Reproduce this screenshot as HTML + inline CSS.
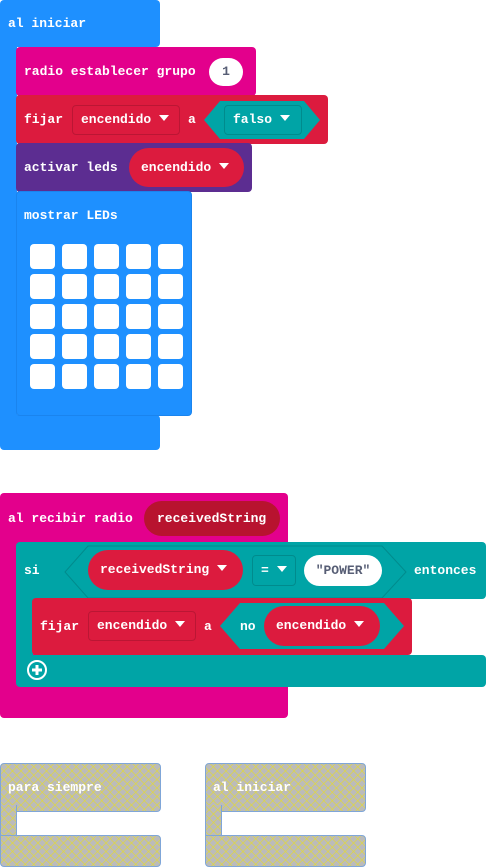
<!DOCTYPE html>
<html><head><meta charset="utf-8"><style>
*{margin:0;padding:0;box-sizing:border-box}
body{width:486px;height:867px;background:#fff;position:relative;overflow:hidden;font-family:"Liberation Mono","DejaVu Sans Mono",monospace;font-weight:bold;font-size:13px;color:#fff}
.a{position:absolute}
.t{position:absolute;white-space:nowrap;line-height:16px}
.r{border-radius:4px}
.led{position:absolute;width:25px;height:25px;background:#fff;border-radius:4px}
.dd{position:absolute;border-radius:4px;border:1px solid rgba(0,0,0,.15)}
.pill{position:absolute;border-radius:20px}
.dis{background-color:#bbb;background-image:repeating-linear-gradient(45deg,rgba(230,220,40,.55) 0 1px,transparent 1px 6px),repeating-linear-gradient(-45deg,rgba(230,220,40,.55) 0 1px,transparent 1px 6px);border:1px solid #7fa6d8}
.tri{display:inline-block;width:0;height:0;border-left:5px solid transparent;border-right:5px solid transparent;border-top:6px solid #fff;margin-left:8px;vertical-align:2px}
</style></head><body>
<!-- block 1 -->
<div class="a r" style="left:0;top:0;width:160px;height:47px;background:#1e90ff"></div>
<div class="a" style="left:0;top:40px;width:17px;height:400px;background:#1e90ff"></div>
<div class="a r" style="left:0;top:415px;width:160px;height:35px;background:#1e90ff"></div>
<div class="t" style="left:8px;top:16px">al iniciar</div>

<div class="a r" style="left:16px;top:47px;width:240px;height:49px;background:#e3008c"></div>
<div class="t" style="left:24px;top:64px">radio establecer grupo</div>
<div class="pill" style="left:209px;top:58px;width:34px;height:28px;background:#fff;color:#575e75;text-align:center;line-height:28px">1</div>

<div class="a r" style="left:16px;top:95px;width:312px;height:49px;background:#dc1b3e"></div>
<div class="t" style="left:24px;top:112px">fijar</div>
<div class="dd" style="left:72px;top:105px;width:108px;height:30px;line-height:28px;padding-left:8px">encendido<span class="tri"></span></div>
<div class="t" style="left:188px;top:112px">a</div>
<svg class="a" style="left:204px;top:100px" width="118" height="40"><polygon points="0,20 16,1 100,1 116,20 100,39 16,39" fill="#00a4a6"/></svg>
<div class="dd" style="left:224px;top:105px;width:78px;height:30px;line-height:28px;padding-left:8px">falso<span class="tri"></span></div>

<div class="a r" style="left:16px;top:143px;width:236px;height:49px;background:#5c2d91"></div>
<div class="t" style="left:24px;top:160px">activar leds</div>
<div class="pill" style="left:129px;top:148px;width:115px;height:39px;background:#dc1b3e;line-height:39px;padding-left:12px">encendido<span class="tri"></span></div>

<div class="a r" style="left:16px;top:191px;width:176px;height:225px;background:#1e90ff;border:1px solid #1a84ee"></div>
<div class="t" style="left:24px;top:208px">mostrar LEDs</div>
<div class="led" style="left:30px;top:244px"></div><div class="led" style="left:62px;top:244px"></div><div class="led" style="left:94px;top:244px"></div><div class="led" style="left:126px;top:244px"></div><div class="led" style="left:158px;top:244px"></div>
<div class="led" style="left:30px;top:274px"></div><div class="led" style="left:62px;top:274px"></div><div class="led" style="left:94px;top:274px"></div><div class="led" style="left:126px;top:274px"></div><div class="led" style="left:158px;top:274px"></div>
<div class="led" style="left:30px;top:304px"></div><div class="led" style="left:62px;top:304px"></div><div class="led" style="left:94px;top:304px"></div><div class="led" style="left:126px;top:304px"></div><div class="led" style="left:158px;top:304px"></div>
<div class="led" style="left:30px;top:334px"></div><div class="led" style="left:62px;top:334px"></div><div class="led" style="left:94px;top:334px"></div><div class="led" style="left:126px;top:334px"></div><div class="led" style="left:158px;top:334px"></div>
<div class="led" style="left:30px;top:364px"></div><div class="led" style="left:62px;top:364px"></div><div class="led" style="left:94px;top:364px"></div><div class="led" style="left:126px;top:364px"></div><div class="led" style="left:158px;top:364px"></div>

<!-- block 2 -->
<div class="a r" style="left:0;top:493px;width:288px;height:225px;background:#e3008c"></div>
<div class="t" style="left:8px;top:511px">al recibir radio</div>
<div class="pill" style="left:144px;top:501px;width:136px;height:35px;background:#b8132f;line-height:35px;padding-left:13px">receivedString</div>

<div class="a r" style="left:16px;top:542px;width:470px;height:57px;background:#00a4a6"></div>
<div class="a" style="left:16px;top:590px;width:17px;height:80px;background:#00a4a6"></div>
<div class="a r" style="left:16px;top:655px;width:470px;height:32px;background:#00a4a6"></div>
<div class="t" style="left:24px;top:563px">si</div>
<svg class="a" style="left:64px;top:545px" width="344" height="54"><polygon points="1,27 24,1 318,1 342,27 318,53 24,53" fill="#00a4a6" stroke="#008b8d"/></svg>
<div class="pill" style="left:88px;top:550px;width:155px;height:40px;background:#dc1b3e;line-height:40px;padding-left:12px">receivedString<span class="tri"></span></div>
<div class="dd" style="left:252px;top:555px;width:44px;height:31px;line-height:29px;padding-left:8px">=<span class="tri"></span></div>
<div class="pill" style="left:304px;top:555px;width:78px;height:31px;background:#fff;color:#575e75;line-height:31px;text-align:center">"POWER"</div>
<div class="t" style="left:414px;top:563px">entonces</div>

<div class="a r" style="left:32px;top:598px;width:380px;height:57px;background:#dc1b3e"></div>
<div class="t" style="left:40px;top:619px">fijar</div>
<div class="dd" style="left:88px;top:611px;width:108px;height:30px;line-height:28px;padding-left:8px">encendido<span class="tri"></span></div>
<div class="t" style="left:204px;top:619px">a</div>
<svg class="a" style="left:220px;top:602px" width="186" height="50"><polygon points="0,24 20,1 164,1 184,24 164,47 20,47" fill="#00a4a6"/></svg>
<div class="t" style="left:240px;top:619px">no</div>
<div class="pill" style="left:264px;top:606px;width:116px;height:40px;background:#dc1b3e;line-height:40px;padding-left:12px">encendido<span class="tri"></span></div>
<svg class="a" style="left:26px;top:659px" width="22" height="22"><circle cx="11" cy="11" r="9" fill="none" stroke="#fff" stroke-width="2"/><path d="M11 6v10M6 11h10" stroke="#fff" stroke-width="3"/></svg>

<!-- disabled -->
<div class="a dis r" style="left:0;top:763px;width:161px;height:49px"></div>
<div class="a dis" style="left:0;top:805px;width:17px;height:36px;border-top:none;border-bottom:none"></div>
<div class="a dis r" style="left:0;top:835px;width:161px;height:32px;border-top-left-radius:0"></div>
<div class="t" style="left:8px;top:780px">para siempre</div>
<div class="a dis r" style="left:205px;top:763px;width:161px;height:49px"></div>
<div class="a dis" style="left:205px;top:805px;width:17px;height:36px;border-top:none;border-bottom:none"></div>
<div class="a dis r" style="left:205px;top:835px;width:161px;height:32px;border-top-left-radius:0"></div>
<div class="t" style="left:213px;top:780px">al iniciar</div>
</body></html>
